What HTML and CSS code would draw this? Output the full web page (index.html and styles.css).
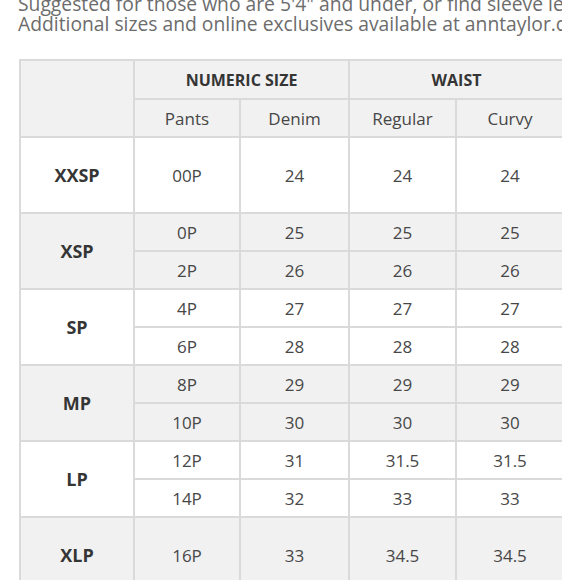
FILE: index.html
```html
<!DOCTYPE html>
<html>
<head>
<meta charset="utf-8">
<link rel="stylesheet" href="styles.css">
</head>
<body>
<div class="wrap">
  <div class="intro">
    <p>Suggested for those who are 5'4" and under, or find sleeve length too long.</p>
    <p>Additional sizes and online exclusives available at anntaylor.com.</p>
  </div>
  <table class="chart">
    <colgroup>
      <col class="c0"><col class="c1"><col class="c2"><col class="c3"><col class="c4">
    </colgroup>
    <thead>
      <tr class="h1">
        <th rowspan="2"></th>
        <th colspan="2">NUMERIC SIZE</th>
        <th colspan="2">WAIST</th>
      </tr>
      <tr class="h2">
        <th>Pants</th><th>Denim</th><th>Regular</th><th>Curvy</th>
      </tr>
    </thead>
    <tbody class="white">
      <tr class="tall"><td class="size">XXSP</td><td>00P</td><td>24</td><td>24</td><td>24</td></tr>
    </tbody>
    <tbody class="gray">
      <tr><td class="size" rowspan="2">XSP</td><td>0P</td><td>25</td><td>25</td><td>25</td></tr>
      <tr><td>2P</td><td>26</td><td>26</td><td>26</td></tr>
    </tbody>
    <tbody class="white">
      <tr><td class="size" rowspan="2">SP</td><td>4P</td><td>27</td><td>27</td><td>27</td></tr>
      <tr><td>6P</td><td>28</td><td>28</td><td>28</td></tr>
    </tbody>
    <tbody class="gray">
      <tr><td class="size" rowspan="2">MP</td><td>8P</td><td>29</td><td>29</td><td>29</td></tr>
      <tr><td>10P</td><td>30</td><td>30</td><td>30</td></tr>
    </tbody>
    <tbody class="white">
      <tr><td class="size" rowspan="2">LP</td><td>12P</td><td>31</td><td>31.5</td><td>31.5</td></tr>
      <tr><td>14P</td><td>32</td><td>33</td><td>33</td></tr>
    </tbody>
    <tbody class="gray">
      <tr class="tall"><td class="size">XLP</td><td>16P</td><td>33</td><td>34.5</td><td>34.5</td></tr>
    </tbody>
  </table>
</div>
</body>
</html>
```

FILE: styles.css
```css
html, body {
  margin: 0;
  padding: 0;
  background: #ffffff;
}
body {
  font-family: "Open Sans", "Liberation Sans", sans-serif;
  height: 580px;
  overflow: hidden;
}
.wrap {
  width: 544px;
  margin-left: 18px;
  overflow: hidden;
}
.intro {
  margin-top: -6px;
  color: #6c6c6c;
  font-size: 19.3px;
  line-height: 20px;
  white-space: nowrap;
}
.intro p {
  margin: 0;
}
.chart {
  margin-top: 25px;
  border-collapse: collapse;
  table-layout: fixed;
  width: 546px;
  margin-left: 1px;
}
.c0 { width: 114px; }
.c1 { width: 106px; }
.c2 { width: 109px; }
.c3 { width: 107px; }
.c4 { width: 108px; }
.chart th, .chart td {
  border: 2px solid #dadada;
  padding: 0;
  text-align: center;
  font-size: 17px;
  color: #474747;
}
.chart thead th {
  background: #f1f1f1;
  font-weight: 400;
}
.chart .h1 th {
  height: 37px;
  font-size: 16px;
  font-weight: 700;
  color: #353535;
}
.h2 th { height: 36px; }
.chart tbody tr { height: 38px; }
.chart tbody tr.tall { height: 76px; }
.gray td { background: #f1f1f1; }
.white td { background: #ffffff; }
.chart td.size {
  font-size: 18px;
  font-weight: 700;
  color: #353535;
}
```
